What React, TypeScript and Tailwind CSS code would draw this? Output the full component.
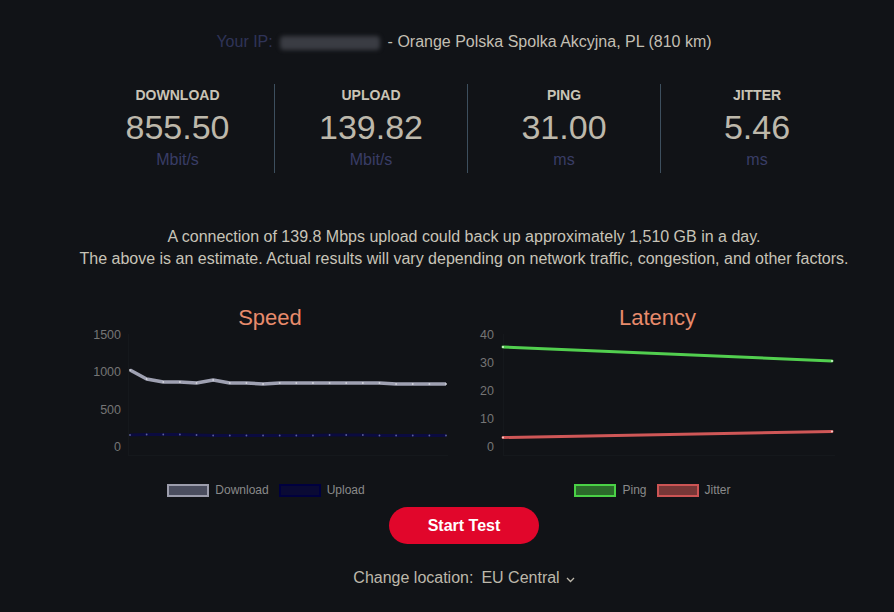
import React from 'react';

const stats = [
  { label: 'DOWNLOAD', value: '855.50', unit: 'Mbit/s' },
  { label: 'UPLOAD', value: '139.82', unit: 'Mbit/s' },
  { label: 'PING', value: '31.00', unit: 'ms' },
  { label: 'JITTER', value: '5.46', unit: 'ms' },
];

const downloadY = [370, 379, 382, 382, 383, 380, 383, 383, 384, 383, 383, 383, 383, 383, 383, 383, 384, 384, 384, 384];
const uploadY = [435, 434.5, 434.5, 434.5, 435, 435.5, 435.5, 435.5, 435.5, 435.5, 435.5, 435.5, 435, 435, 435, 435.5, 435.5, 435.5, 435.5, 435.5];
const xs = downloadY.map((_, i) => 130 + i * (316 / 19));

const toPath = (ys: number[]) => ys.map((y, i) => `${i === 0 ? 'M' : 'L'}${xs[i].toFixed(1)} ${y}`).join(' ');

const LegendItem = ({ box, label }: { box: string; label: string }) => (
  <div className="flex items-center gap-[6px]">
    <span className={`inline-block w-[42px] h-[13px] border-2 ${box}`} />
    <span className="text-[12px] leading-[14px] text-[#8a8a8a]">{label}</span>
  </div>
);

const SpeedChart = () => (
  <svg width="370" height="145" viewBox="85 326 370 145" className="block">
    <g fill="#757575" fontSize="12.5" fontFamily="Liberation Sans, Arial, sans-serif" textAnchor="end">
      <text x="121" y="338.5">1500</text>
      <text x="121" y="375.5">1000</text>
      <text x="121" y="413.5">500</text>
      <text x="121" y="450.5">0</text>
    </g>
    <path d="M128.5 334 V456 M128 455.5 H448" stroke="#15181c" strokeWidth="1" fill="none" />
    <path d={toPath(uploadY)} stroke="#0b0b40" strokeWidth="3" fill="none" strokeLinejoin="round" />
    {xs.map((x, i) => (
      <circle key={`u${i}`} cx={x} cy={uploadY[i]} r="0.9" fill="#5a5f9a" />
    ))}
    <path d={toPath(downloadY)} stroke="#9fa1b2" strokeWidth="3.4" fill="none" strokeLinejoin="round" />
    {xs.map((x, i) => (
      <circle key={`d${i}`} cx={x} cy={downloadY[i]} r="0.9" fill="#d6d7de" />
    ))}
  </svg>
);

const LatencyChart = () => (
  <svg width="375" height="145" viewBox="470 326 375 145" className="block">
    <g fill="#757575" fontSize="12.5" fontFamily="Liberation Sans, Arial, sans-serif" textAnchor="end">
      <text x="494" y="338.5">40</text>
      <text x="494" y="366.5">30</text>
      <text x="494" y="394.5">20</text>
      <text x="494" y="422.5">10</text>
      <text x="494" y="450.5">0</text>
    </g>
    <path d="M503.5 334 V456 M503 455.5 H835" stroke="#15181c" strokeWidth="1" fill="none" />
    <line x1="503" y1="347" x2="832" y2="361" stroke="#52cf4f" strokeWidth="3" strokeLinecap="round" />
    <line x1="503" y1="437.5" x2="832" y2="431.5" stroke="#cf5757" strokeWidth="3" strokeLinecap="round" />
    <circle cx="503" cy="347" r="1" fill="#d8f5d6" />
    <circle cx="832" cy="361" r="1" fill="#d8f5d6" />
    <circle cx="503" cy="437.5" r="1" fill="#f3d1d1" />
    <circle cx="832" cy="431.5" r="1" fill="#f3d1d1" />
  </svg>
);

export default function App() {
  return (
    <div className="w-[894px] h-[612px] bg-[#111317] overflow-hidden font-['Liberation_Sans',Arial,sans-serif]">
      <div className="ml-[34px] w-[860px] pt-[33px] text-center text-[16px] leading-[18px]">
        <span className="text-[#2f3357]">Your IP: </span>
        <span className="inline-block align-middle w-[100px] h-[14px] bg-[#3a3c43] blur-[2px] rounded-sm mx-[3px]" />
        <span className="text-[#c3bfb3]"> - Orange Polska Spolka Akcyjna, PL (810 km)</span>
      </div>

      <div className="ml-[81px] w-[772px] mt-[33px] grid grid-cols-4">
        {stats.map((s, i) => (
          <div
            key={s.label}
            className={`h-[89px] flex flex-col items-center pt-[3px] ${i > 0 ? 'border-l border-[#3d4f5e]' : ''}`}
          >
            <div className="text-[14px] leading-[16px] font-bold text-[#c9c4b6]">{s.label}</div>
            <div className="mt-[5px] text-[34px] leading-[38px] text-[#bdb8ab]">{s.value}</div>
            <div className="mt-[5px] text-[16px] leading-[18px] text-[#393d66]">{s.unit}</div>
          </div>
        ))}
      </div>

      <div className="ml-[34px] w-[860px] mt-[53px] text-center text-[16px] leading-[22px] text-[#c8c4b8]">
        <p>A connection of 139.8 Mbps upload could back up approximately 1,510 GB in a day.</p>
        <p>The above is an estimate. Actual results will vary depending on network traffic, congestion, and other factors.</p>
      </div>

      <div className="ml-[85px] mt-[35px] flex gap-[15px]">
        <div className="w-[370px] flex flex-col">
          <div className="h-[21px] text-center text-[22px] leading-[26px] text-[#e88b6c]">Speed</div>
          <SpeedChart />
          <div className="mt-[12px] flex justify-center gap-[10px] pr-[8px]">
            <LegendItem box="bg-[#4b4e5f] border-[#9c9dac]" label="Download" />
            <LegendItem box="bg-[#0a0a34] border-[#00003f]" label="Upload" />
          </div>
        </div>
        <div className="w-[375px] flex flex-col">
          <div className="h-[21px] text-center text-[22px] leading-[26px] text-[#e88b6c]">Latency</div>
          <LatencyChart />
          <div className="mt-[12px] flex justify-center gap-[10px] pr-[10px]">
            <LegendItem box="bg-[#2b6a2a] border-[#4ad146]" label="Ping" />
            <LegendItem box="bg-[#773737] border-[#cc5454]" label="Jitter" />
          </div>
        </div>
      </div>

      <div className="ml-[34px] w-[860px] mt-[10px] flex justify-center">
        <button className="w-[150px] h-[37px] rounded-full bg-[#e1062b] text-white text-[16px] font-bold">
          Start Test
        </button>
      </div>

      <div className="ml-[34px] w-[860px] mt-[25px] flex justify-center items-center text-[16px] leading-[18px] text-[#bdb8ab]">
        <span>Change location:</span>
        <span className="ml-[8px]">EU Central</span>
        <svg width="9" height="6" viewBox="0 0 9 6" className="ml-[6px] mt-[3px]">
          <path d="M1 1 L4.5 4.5 L8 1" stroke="#bdb8ab" strokeWidth="1.3" fill="none" />
        </svg>
      </div>
    </div>
  );
}
